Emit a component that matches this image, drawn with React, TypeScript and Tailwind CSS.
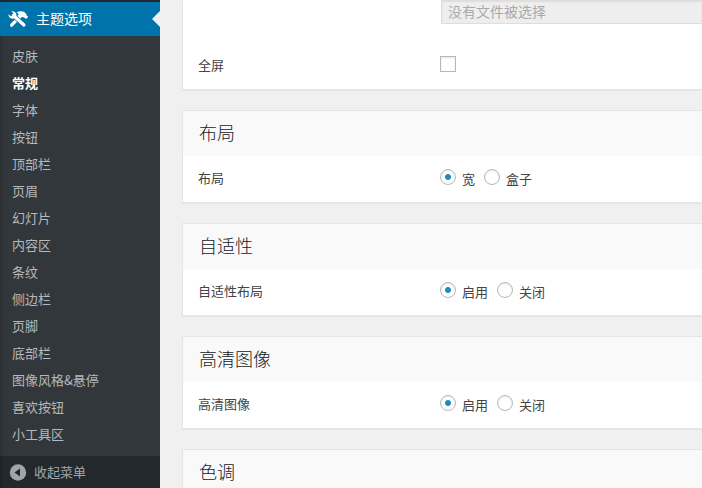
import React from "react";

const menuItems = [
  "皮肤",
  "常规",
  "字体",
  "按钮",
  "顶部栏",
  "页眉",
  "幻灯片",
  "内容区",
  "条纹",
  "侧边栏",
  "页脚",
  "底部栏",
  "图像风格&悬停",
  "喜欢按钮",
  "小工具区",
];

function ToolsIcon() {
  return (
    <svg className="h-5 w-5 shrink-0" viewBox="0 0 20 20" aria-hidden="true">
      <path d="M3.600 16.200L12.500 7.200" stroke="#fff" strokeWidth="3.200" strokeLinecap="round" />
      <path
        d="M8.600 3.800C10.500 2.200 13.500 1.900 16 2.800L18.300 5l.2 1.300 1.700 1.500-2.200 2.300-1.800-1.700-1.500-.1-1.400-1.200-2.200 1.800-1.900-1.900 1.700-1.500c-.6-.8-1.200-1.300-2.300-1.700z"
        fill="#fff"
      />
      <path d="M5.500 6.500L15.800 16" stroke="#0073aa" strokeWidth="4.600" />
      <path d="M5.500 6.500L15.900 15.900" stroke="#fff" strokeWidth="3.400" strokeLinecap="round" />
      <path
        d="M3.500 2.300C5.600 1.700 8.200 3.200 8.400 5.600c.2 2-1.300 4-3.600 4.100C2.300 9.800.3 7.900.4 5.300l2.500 2 2.100-.5.500-2z"
        fill="#fff"
      />
    </svg>
  );
}

function Sidebar() {
  return (
    <nav className="relative flex w-40 shrink-0 flex-col bg-[#32373c] pt-0.5 shadow-[inset_0_2px_0_#23282d]">
      <div className="pointer-events-none absolute inset-y-0 left-0 w-1 bg-gradient-to-r from-black/15 to-transparent" />
      <a
        href="#options"
        className="relative flex h-[34px] items-center gap-2 bg-[#0073aa] pl-2 text-sm text-white"
      >
        <ToolsIcon />
        <span className="pb-0.5">主题选项</span>
        <span className="absolute top-[9px] right-0 border-y-8 border-r-8 border-y-transparent border-r-[#f0f0f0]" />
      </a>
      <ul className="pt-1.5 pb-[9px]">
        {menuItems.map((item) => (
          <li key={item}>
            <a
              href="#section"
              className={
                item === "常规"
                  ? "block pl-3 leading-[27px] font-bold text-white"
                  : "block pl-3 leading-[27px] text-[#b4b9be]"
              }
            >
              {item}
            </a>
          </li>
        ))}
      </ul>
      <button type="button" className="flex flex-1 items-start bg-[#23282d] pl-2 text-[#a0a5aa]">
        <span className="flex h-8 items-center gap-1.5">
          <svg className="h-5 w-5" viewBox="0 0 20 20" aria-hidden="true">
            <circle cx="10" cy="10.500" r="8.200" fill="#a0a5aa" />
            <path d="M12 6.500v8L6.500 10.500z" fill="#23282d" />
          </svg>
          收起菜单
        </span>
      </button>
    </nav>
  );
}

function Card({ title, children }: { title: string; children?: React.ReactNode }) {
  return (
    <section className="border border-r-0 border-[#e5e5e5] bg-white shadow-[0_1px_1px_rgba(0,0,0,0.04)]">
      <h3 className="h-[45px] bg-[#f9f9f9] pl-4 text-lg leading-[42px] font-light text-[#15191d]">{title}</h3>
      {children}
    </section>
  );
}

function RadioRow({ label, name, options }: { label: string; name: string; options: string[] }) {
  return (
    <fieldset className="flex h-[46px] items-start pt-[13px] pl-[15px]">
      <legend className="float-left w-[242px] leading-[18px]">{label}</legend>
      <div className="flex gap-[9px]">
        {options.map((option, i) => (
          <label key={option} className="flex items-start gap-1.5 leading-5">
            <input
              type="radio"
              name={name}
              defaultChecked={i === 0}
              className="h-4 w-4 appearance-none rounded-full border border-[#b4b9be] bg-white shadow-[inset_0_1px_2px_rgba(0,0,0,0.1)] checked:bg-[radial-gradient(circle,#1e8cbe_0_2.5px,transparent_3.5px)]"
            />
            {option}
          </label>
        ))}
      </div>
    </fieldset>
  );
}

export default function App() {
  return (
    <div className="flex h-screen overflow-hidden bg-[#f0f0f0] font-['Noto_Sans_CJK_SC',sans-serif] text-[13px] text-[#444]">
      <Sidebar />
      <main className="flex min-w-0 flex-1 flex-col gap-5 pl-[22px]">
        <section className="border-b border-l border-[#e5e5e5] bg-white shadow-[0_1px_1px_rgba(0,0,0,0.04)]">
          <div className="pl-[258px]">
            <input
              type="text"
              disabled
              aria-label="文件"
              value="没有文件被选择"
              className="block h-6 w-full border border-r-0 border-[#ddd] bg-[#eee] px-1.5 pb-0.5 text-sm text-[#aaa] shadow-[inset_0_1px_2px_rgba(0,0,0,0.07)]"
            />
          </div>
          <div className="flex h-[65px] items-start pt-8 pl-[15px]">
            <label htmlFor="fullscreen" className="w-[242px] leading-[18px]">
              全屏
            </label>
            <input
              id="fullscreen"
              type="checkbox"
              className="h-4 w-4 appearance-none border border-[#b4b9be] bg-white shadow-[inset_0_1px_2px_rgba(0,0,0,0.1)]"
            />
          </div>
        </section>
        <Card title="布局">
          <RadioRow label="布局" name="layout" options={["宽", "盒子"]} />
        </Card>
        <Card title="自适性">
          <RadioRow label="自适性布局" name="responsive" options={["启用", "关闭"]} />
        </Card>
        <Card title="高清图像">
          <RadioRow label="高清图像" name="retina" options={["启用", "关闭"]} />
        </Card>
        <Card title="色调" />
      </main>
    </div>
  );
}
